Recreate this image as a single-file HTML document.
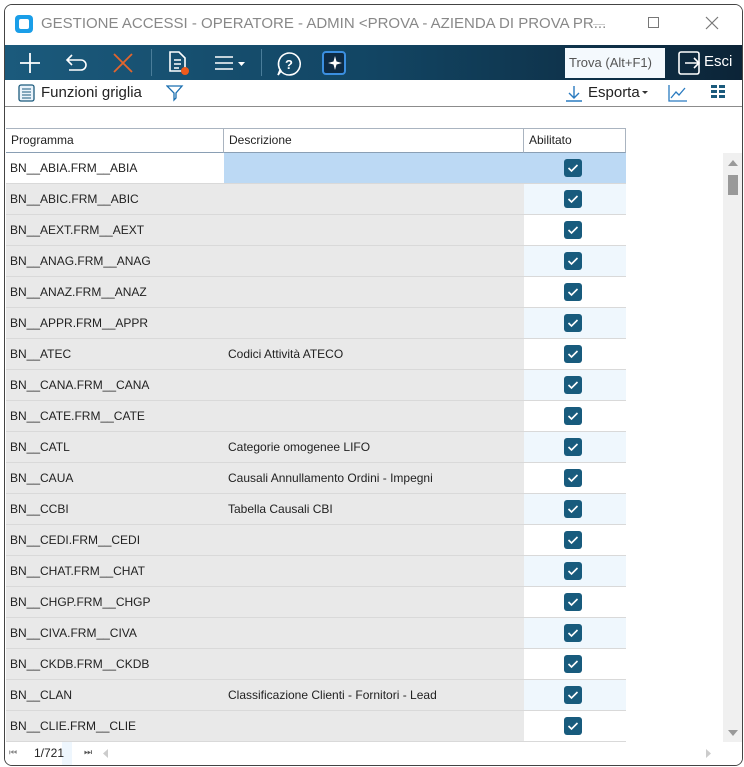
<!DOCTYPE html>
<html><head><meta charset="utf-8"><style>
*{margin:0;padding:0;box-sizing:border-box}
body{width:744px;height:767px;background:#fff;font-family:"Liberation Sans",sans-serif;overflow:hidden;position:relative}
.win{position:absolute;left:4px;top:4px;width:739px;height:762px;border:1px solid #444;border-radius:8px;overflow:hidden;background:#fff}
.abs{position:absolute}
.title{left:0;top:0;width:100%;height:39px;background:#fff}
.tb{left:0;top:40px;width:100%;height:35px;background:linear-gradient(90deg,#1b5a7c 0%,#124563 50%,#0c2437 100%)}
.tb2{left:0;top:75px;width:100%;height:27px;background:#fff;border-bottom:1px solid #8c8c8c}
.hdr{top:123px;height:25px;border-top:1px solid #aab4c0;border-bottom:1px solid #8a9fb4;font-size:12px;color:#222;line-height:23px;padding-left:5px;background:#fff}
.row{position:absolute;left:1px;height:31px;width:620px;font-size:12px;color:#222;line-height:31px}
.c1,.c2,.c3{position:absolute;top:0;height:31px;border-bottom:1px solid #d9d9d9}
.c1{left:0;width:218px;background:#e9e9e9;padding-left:4px}
.c2{left:218px;width:300px;background:#e9e9e9;padding-left:4px}
.c3{left:518px;width:102px}
.cb{position:absolute;left:40px;top:6px;width:18px;height:18px;background:#185b7d;border-radius:3px}
.cb svg{position:absolute;left:3px;top:4px}
</style></head><body>
<div class="win">
 <div class="abs title">
  <div class="abs" style="left:10px;top:10px;width:18px;height:18px;background:#1a9ee8;border-radius:4px"><div style="position:absolute;left:4px;top:4px;width:10px;height:10px;background:#fff;border-radius:2px"></div></div>
  <div class="abs" style="left:36px;top:10px;font-size:15px;color:#888;white-space:nowrap">GESTIONE ACCESSI - OPERATORE - ADMIN &lt;PROVA - AZIENDA DI PROVA PR...</div>
  <div class="abs" style="left:588px;top:19px;width:12px;height:1px;background:#ccc"></div>
  <div class="abs" style="left:643px;top:12px;width:11px;height:11px;border:1px solid #777"></div>
  <svg class="abs" style="left:700px;top:11px" width="14" height="14"><path d="M1 1L13 13M13 1L1 13" stroke="#777" stroke-width="1.2"/></svg>
 </div>
 <div class="abs tb">
  <svg class="abs" style="left:14px;top:7px" width="22" height="22"><path d="M11 1V21M1 11H21" stroke="#fff" stroke-width="1.8"/></svg>
  <svg class="abs" style="left:60px;top:8px" width="24" height="20"><path d="M7 2L2 7L7 12M2 7H16a5 5 0 0 1 0 10H4" fill="none" stroke="#fff" stroke-width="1.6"/></svg>
  <svg class="abs" style="left:107px;top:7px" width="22" height="22"><path d="M2 2L20 20M20 2L2 20" stroke="#e2652d" stroke-width="1.8"/></svg>
  <div class="abs" style="left:146px;top:4px;width:1px;height:27px;background:#4a7d9a"></div>
  <svg class="abs" style="left:162px;top:5px" width="24" height="26"><path d="M3 2H12L18 8V21H3Z" fill="none" stroke="#fff" stroke-width="1.6"/><path d="M7 10H14M7 14H14M7 18H12" stroke="#fff" stroke-width="1.4"/><circle cx="18" cy="21" r="4" fill="#ee5a1c"/></svg>
  <svg class="abs" style="left:209px;top:10px" width="36" height="16"><path d="M1 2H19M1 8H19M1 14H19" stroke="#fff" stroke-width="1.6"/><path d="M24 7H31L27.5 11Z" fill="#fff"/></svg>
  <div class="abs" style="left:256px;top:4px;width:1px;height:27px;background:#4a7d9a"></div>
  <svg class="abs" style="left:271px;top:6px" width="26" height="26"><path d="M13 2a11 11 0 1 1-9 17L2 24 5 20A11 11 0 0 1 13 2Z" fill="none" stroke="#fff" stroke-width="1.6"/><text x="13" y="18" font-size="13" font-family="Liberation Sans" font-weight="bold" fill="#fff" text-anchor="middle">?</text></svg>
  <div class="abs" style="left:317px;top:6px;width:24px;height:24px;background:#0d2b44;border:2px solid #3b8fe0;border-radius:4px"><svg width="20" height="20"><path d="M11 3L12.5 8.5L18 10L12.5 11.5L11 17L9.5 11.5L4 10L9.5 8.5Z" fill="#fff"/></svg></div>
  <div class="abs" style="left:560px;top:3px;width:100px;height:30px;background:#f4f9fd;font-size:13px;color:#555;line-height:30px;padding-left:4px">Trova (Alt+F1)</div>
  <svg class="abs" style="left:672px;top:5px" width="26" height="26"><path d="M8 13H22M17 8L22 13L17 18" fill="none" stroke="#fff" stroke-width="1.6"/><rect x="2" y="2" width="20" height="22" rx="2" fill="none" stroke="#fff" stroke-width="1.6"/></svg>
  <div class="abs" style="left:699px;top:8px;font-size:15px;color:#fff">Esci</div>
 </div>
 <div class="abs tb2">
  <svg class="abs" style="left:13px;top:4px" width="18" height="18"><rect x="1" y="1" width="15" height="16" rx="2" fill="#eaf3fb" stroke="#1b5a7c" stroke-width="1.3"/><path d="M4 5H13M4 8H13M4 11H13M4 14H13" stroke="#1b5a7c"/></svg>
  <div class="abs" style="left:36px;top:4px;font-size:15px;color:#222">Funzioni griglia</div>
  <svg class="abs" style="left:161px;top:4px" width="18" height="20"><path d="M1 2H16L10 9V14L8 16V9Z" fill="none" stroke="#1b6fb0" stroke-width="1.3"/></svg>
  <svg class="abs" style="left:560px;top:5px" width="18" height="18"><path d="M9 1V12M4 8L9 13L14 8M1 16H17" fill="none" stroke="#2a7bc0" stroke-width="1.4"/></svg>
  <div class="abs" style="left:583px;top:4px;font-size:15px;color:#222">Esporta</div>
  <svg class="abs" style="left:637px;top:10px" width="8" height="6"><path d="M0 1H6L3 4Z" fill="#333"/></svg>
  <svg class="abs" style="left:663px;top:4px" width="20" height="18"><path d="M1 1V17H19" fill="none" stroke="#2a7bc0" stroke-width="1.3"/><path d="M3 14L8 8L11 11L17 4" fill="none" stroke="#2a7bc0" stroke-width="1.3"/></svg>
  <svg class="abs" style="left:706px;top:5px" width="14" height="14"><g fill="#1b5a7c"><rect x="0" y="0" width="6" height="3"/><rect x="8" y="0" width="6" height="3"/><rect x="0" y="5" width="6" height="3"/><rect x="8" y="5" width="6" height="3"/><rect x="0" y="10" width="6" height="3"/><rect x="8" y="10" width="6" height="3"/></g></svg>
 </div>
 <div class="abs hdr" style="left:1px;width:218px;border-right:1px solid #aab4c0">Programma</div>
 <div class="abs hdr" style="left:219px;width:300px;border-right:1px solid #aab4c0">Descrizione</div>
 <div class="abs hdr" style="left:519px;width:102px;border-right:1px solid #aab4c0">Abilitato</div>
 <div id="rows"></div>
 <div class="abs" style="left:718px;top:148px;width:19px;height:589px;background:#f0f0f0">
  <svg class="abs" style="left:5px;top:7px" width="10" height="6"><path d="M0 6L5 0L10 6Z" fill="#999"/></svg>
  <div class="abs" style="left:5px;top:22px;width:10px;height:20px;background:#999"></div>
  <svg class="abs" style="left:5px;top:577px" width="10" height="6"><path d="M0 0L5 6L10 0Z" fill="#999"/></svg>
 </div>
 <div class="abs" style="left:0;top:737px;width:737px;height:24px;background:#fff;font-size:12px;color:#222">
  <div class="abs" style="left:57px;top:0;width:10px;height:23px;background:#eef6fd"></div>
  <span class="abs" style="left:4px;top:5px;color:#888;font-size:9px">⏮</span>
  <span class="abs" style="left:29px;top:4px">1/721</span>
  <span class="abs" style="left:79px;top:5px;color:#555;font-size:9px">⏭</span>
  <svg class="abs" style="left:98px;top:7px" width="6" height="9"><path d="M5 0L0 4.5L5 9Z" fill="#ccc"/></svg>
  <svg class="abs" style="left:701px;top:7px" width="6" height="9"><path d="M0 0L5 4.5L0 9Z" fill="#ccc"/></svg>
 </div>
</div>
<script>
var d=[["BN__ABIA.FRM__ABIA",""],["BN__ABIC.FRM__ABIC",""],["BN__AEXT.FRM__AEXT",""],["BN__ANAG.FRM__ANAG",""],["BN__ANAZ.FRM__ANAZ",""],["BN__APPR.FRM__APPR",""],["BN__ATEC","Codici Attività ATECO"],["BN__CANA.FRM__CANA",""],["BN__CATE.FRM__CATE",""],["BN__CATL","Categorie omogenee LIFO"],["BN__CAUA","Causali Annullamento Ordini - Impegni"],["BN__CCBI","Tabella Causali CBI"],["BN__CEDI.FRM__CEDI",""],["BN__CHAT.FRM__CHAT",""],["BN__CHGP.FRM__CHGP",""],["BN__CIVA.FRM__CIVA",""],["BN__CKDB.FRM__CKDB",""],["BN__CLAN","Classificazione Clienti - Fornitori - Lead"],["BN__CLIE.FRM__CLIE",""]];
var h="";
var ck='<div class="cb"><svg width="12" height="10"><path d="M1.5 5L4.5 8L10.5 2" fill="none" stroke="#fff" stroke-width="1.6"/></svg></div>';
d.forEach(function(r,i){
 var top=148+i*31;
 var s1=i==0?"background:#fff":"";
 var s2=i==0?"background:#bcd9f4":"";
 var s3=i==0?"background:#bcd9f4":(i%2?"background:#eff7fd":"background:#fff");
 h+='<div class="row" style="top:'+top+'px"><div class="c1" style="'+s1+'">'+r[0]+'</div><div class="c2" style="'+s2+'">'+r[1]+'</div><div class="c3" style="'+s3+'">'+ck+'</div></div>';
});
document.getElementById("rows").innerHTML=h;
</script>
</body></html>
